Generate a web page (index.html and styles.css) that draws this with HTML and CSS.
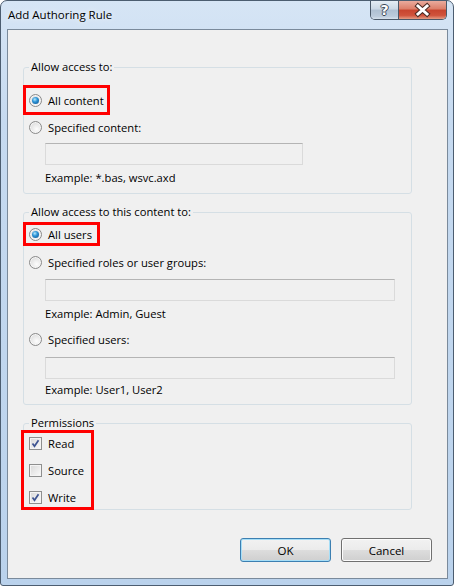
FILE: index.html
```html
<!DOCTYPE html>
<html lang="en">
<head>
  <meta charset="UTF-8">
  <title>Add Authoring Rule</title>
  <link rel="stylesheet" href="styles.css">
</head>
<body>
  <div class="window">
    <div class="titlebar">
      <span class="title">Add Authoring Rule</span>
      <div class="caption-buttons">
        <span class="cap-btn help">?</span>
        <span class="cap-btn close">
          <svg width="47" height="18" viewBox="0 0 47 18">
            <path d="M19 5 L28 13 M28 5 L19 13" stroke="#4b2b24" stroke-width="5" stroke-linecap="square"/>
            <path d="M19 5 L28 13 M28 5 L19 13" stroke="#fff" stroke-width="3" stroke-linecap="square"/>
          </svg>
        </span>
      </div>
    </div>

    <div class="client">
      <fieldset class="group">
        <legend>Allow access to:</legend>
        <div class="mark mark-content">
          <div class="row"><span class="radio on"></span>All content</div>
        </div>
        <div class="row spec-content"><span class="radio"></span>Specified content:</div>
        <div class="textbox tb-content"></div>
        <div class="hint">Example: *.bas, wsvc.axd</div>
      </fieldset>

      <fieldset class="group group-users">
        <legend>Allow access to this content to:</legend>
        <div class="mark mark-users">
          <div class="row"><span class="radio on"></span>All users</div>
        </div>
        <div class="row spec-roles"><span class="radio"></span>Specified roles or user groups:</div>
        <div class="textbox tb-roles"></div>
        <div class="hint">Example: Admin, Guest</div>
        <div class="row spec-users"><span class="radio"></span>Specified users:</div>
        <div class="textbox tb-users"></div>
        <div class="hint hint-users">Example: User1, User2</div>
      </fieldset>

      <fieldset class="group group-perms">
        <legend>Permissions</legend>
        <div class="mark mark-perms">
          <div class="row">
            <span class="check"><svg width="11" height="11" viewBox="0 0 11 11"><path d="M2.5 5.5 L4.5 8.2 L8.5 2.2" fill="none" stroke="#3d5391" stroke-width="1.7"/></svg></span>Read
          </div>
          <div class="row"><span class="check"></span>Source</div>
          <div class="row">
            <span class="check"><svg width="11" height="11" viewBox="0 0 11 11"><path d="M2.5 5.5 L4.5 8.2 L8.5 2.2" fill="none" stroke="#3d5391" stroke-width="1.7"/></svg></span>Write
          </div>
        </div>
      </fieldset>

      <div class="buttons">
        <button class="btn default">OK</button>
        <button class="btn">Cancel</button>
      </div>
    </div>
  </div>
</body>
</html>
```
FILE: styles.css
```css
* {
  box-sizing: border-box;
}

body {
  margin: 0;
  background: #fff;
  font-family: "Open Sans", "Noto Sans", sans-serif;
  font-size: 11.2px;
  color: #000;
}

.window {
  width: 454px;
  height: 586px;
  border: 1px solid #4c5d70;
  border-radius: 7px 7px 3px 3px;
  background: linear-gradient(#d6e5f5, #c6daf0 120px, #bad2ec);
  display: flex;
  flex-direction: column;
  overflow: hidden;
}

/* title bar */
.titlebar {
  flex: none;
  height: 28px;
  display: flex;
  align-items: flex-start;
}

.title {
  padding-left: 7px;
  line-height: 28px;
  font-size: 11.5px;
  text-shadow: 0 0 6px #fff;
}

.caption-buttons {
  margin-left: auto;
  margin-right: 6px;
  height: 19px;
  display: flex;
  border: 1px solid #4a5868;
  border-top: none;
  border-radius: 0 0 5px 5px;
  overflow: hidden;
}

.cap-btn {
  display: flex;
  align-items: center;
  justify-content: center;
}

.help {
  width: 28px;
  border-right: 1px solid #4a5868;
  background: linear-gradient(#e4ecf4, #cbd8e5 45%, #afc0d2 50%, #bccbdb 85%, #d6e2ed);
  color: #fff;
  font: bold 14px "DejaVu Sans", sans-serif;
  text-shadow: 1px 0 0 #3b4756, -1px 0 0 #3b4756, 0 1px 0 #3b4756, 0 -1px 0 #3b4756;
}

.close {
  width: 47px;
  background: linear-gradient(#eaab9d, #dc7d68 45%, #c8442e 50%, #d0533c 80%, #e59c84);
}

/* client area */
.client {
  flex: 1;
  margin: 0 5px 6px 6px;
  border: 1px solid #7a8a9b;
  background: #f0f0f0;
  padding: 29px 15px 0;
  display: flex;
  flex-direction: column;
}

.group {
  margin: 0;
  padding: 0 0 6px;
  width: 389px;
  min-inline-size: 0;
  border: 1px solid #d5dfe5;
  border-radius: 3px;
}

.group legend {
  margin-left: 5px;
  padding: 0 2px;
  line-height: 16px;
}

.group-users {
  margin-top: 10px;
  padding-bottom: 5px;
}

.group-perms {
  margin-top: 10px;
  padding-bottom: 0;
}

.row {
  display: flex;
  align-items: center;
  gap: 6px;
  height: 18px;
  padding-left: 5px;
  white-space: nowrap;
}

.hint {
  height: 18px;
  line-height: 18px;
  padding-left: 21px;
  margin-top: 4px;
}

.hint-users {
  margin-top: 2px;
}

.textbox {
  height: 22px;
  margin-left: 21px;
  border: 1px solid #dadada;
  border-top-color: #b4b4b4;
  background: #f0f0f0;
}

.tb-content {
  width: 258px;
  margin-top: 7px;
}

.tb-roles {
  width: 350px;
  margin-top: 8px;
}

.tb-users {
  width: 350px;
  margin-top: 9px;
}

.spec-content {
  margin-top: 3px;
}

.spec-roles,
.spec-users {
  margin-top: 7px;
}

/* red highlight boxes */
.mark {
  width: fit-content;
  border: 3px solid #f00;
}

.mark-content {
  margin: 10px 0 0 -1px;
  padding: 3px 3px 3px 0;
}

.mark-users {
  margin: 2px 0 0 -1px;
  padding-right: 5px;
}

.mark-content .row,
.mark-users .row {
  padding-left: 3px;
}

.mark-perms {
  margin: -1px 0 -1px -3px;
  padding: 1px 7px 1px 0;
  display: flex;
  flex-direction: column;
  gap: 9px;
}

/* controls */
.radio {
  flex: none;
  position: relative;
  width: 13px;
  height: 13px;
  border-radius: 50%;
  border: 1px solid #8a8a8a;
  background: radial-gradient(circle at 60% 65%, #fdfdfd 0, #e6e6e6 55%, #cdcdcd 100%);
  box-shadow: inset 0 0 0 1px #f6f6f6;
}

.radio.on::after {
  content: "";
  position: absolute;
  left: 2px;
  top: 2px;
  width: 7px;
  height: 7px;
  border-radius: 50%;
  background: radial-gradient(circle at 40% 35%, #b5e8fd 0, #2d94d6 40%, #0b4c88 100%);
}

.check {
  flex: none;
  width: 13px;
  height: 13px;
  border: 1px solid #8e8f8f;
  background: linear-gradient(135deg, #d8d8d8, #fbfbfb);
  box-shadow: inset 0 0 0 1px #f4f4f4;
  display: flex;
}

.buttons {
  margin-top: 28px;
  display: flex;
  justify-content: flex-end;
  gap: 10px;
}

.btn {
  width: 91px;
  height: 24px;
  padding: 0;
  font: inherit;
  font-size: 11.5px;
  color: #000;
  border: 1px solid #707070;
  border-radius: 3px;
  background: linear-gradient(#f2f2f2, #ebebeb 50%, #dddddd 50%, #cfcfcf);
  box-shadow: inset 0 0 0 1px #fcfcfc;
}

.btn.default {
  border-color: #3c7fb1;
  box-shadow: inset 0 0 0 1px #a6def7;
}
```
